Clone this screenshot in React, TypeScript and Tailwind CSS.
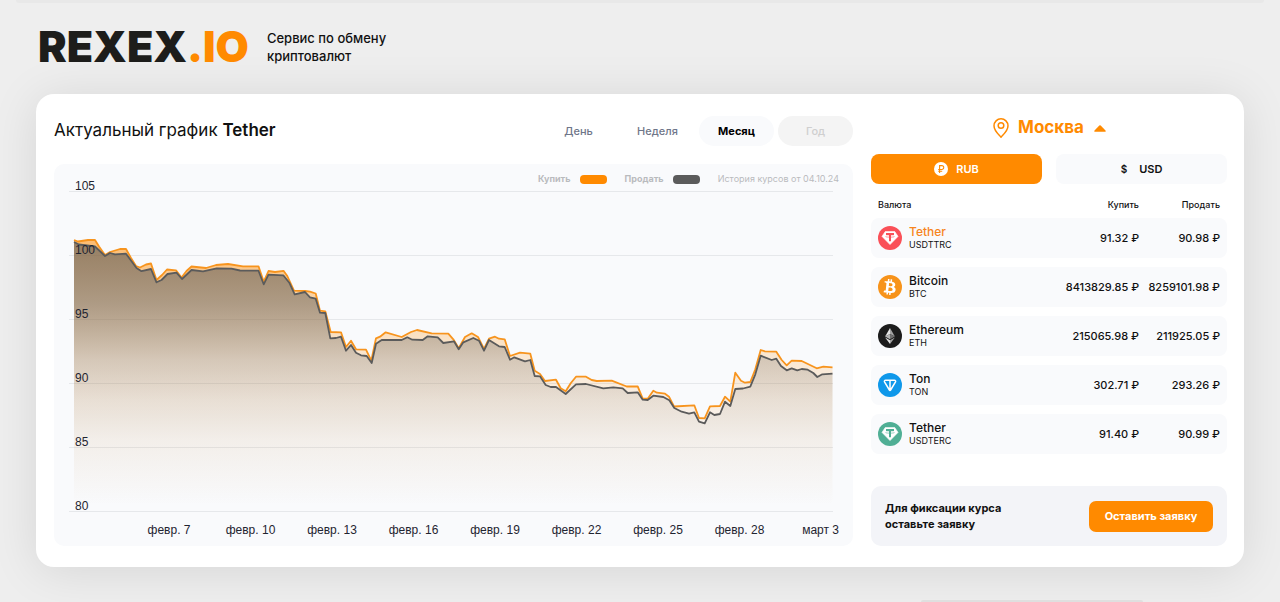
import { useState } from "react";
import { FaBtc } from "react-icons/fa";

type Coin = {
  name: string;
  code: string;
  buy: string;
  sell: string;
  icon: "tether" | "bitcoin" | "ethereum" | "ton";
  color: string;
};

const COINS: Coin[] = [
  { name: "Tether", code: "USDTTRC", buy: "91.32 ₽", sell: "90.98 ₽", icon: "tether", color: "#fa5058" },
  { name: "Bitcoin", code: "BTC", buy: "8413829.85 ₽", sell: "8259101.98 ₽", icon: "bitcoin", color: "#f7931a" },
  { name: "Ethereum", code: "ETH", buy: "215065.98 ₽", sell: "211925.05 ₽", icon: "ethereum", color: "#1c1c1c" },
  { name: "Ton", code: "TON", buy: "302.71 ₽", sell: "293.26 ₽", icon: "ton", color: "#0f98ea" },
  { name: "Tether", code: "USDTERC", buy: "91.40 ₽", sell: "90.99 ₽", icon: "tether", color: "#50af95" },
];

const PERIODS = ["День", "Неделя", "Месяц", "Год"];

const GRID = [
  { label: "105", y: 192 },
  { label: "100", y: 256 },
  { label: "95", y: 320 },
  { label: "90", y: 384 },
  { label: "85", y: 448 },
  { label: "80", y: 512 },
];

const DATES = ["февр. 7", "февр. 10", "февр. 13", "февр. 16", "февр. 19", "февр. 22", "февр. 25", "февр. 28", "март 3"];

const BUY =
  "74,240 78,241.5 88,240 95,240 99,246.5 105,255 110,252 120,249 126,249 131,258 136,266 140,267.5 146,264.5 151,263.5 156.5,280 162,275 167,269.5 176,270.3 181.5,277.5 186.5,271 191.5,266.5 206,268 216,265 228,264 243,266.3 258.5,266.3 263.7,281.5 268.5,271 275,272 283.5,270.8 287.3,276 294,290.7 305,291 310,291.6 315.7,293.5 320,310.7 325.3,311.3 330.7,332 341,332.3 346,347 351,340.7 356,349.3 366,349.7 371.3,360.7 376,338.3 380,336.7 385.7,332.3 401.7,337 411,332 417,330 431.7,333.3 448.3,333.7 453.3,339.3 458.7,348.3 465,337 471.7,333.3 478,337 484,349 489,338.7 495,336.7 499,338.7 504.7,339.3 510,356 520,352.7 530.3,353.7 534.7,370.7 540,374 545,381 556,379.7 560.7,388.3 565.7,391.3 570.7,383.3 576,376.7 586,376.7 591.7,380 596.7,381 611.7,380.7 626.7,386.5 637.7,386.3 642.7,398.7 647.7,398.7 653.3,390.7 657,392.7 665,393.7 669,396.7 674,406.5 694.3,405.3 699,418 704.7,418.3 710,406.3 720,406 725,396.7 730.3,401.7 735.3,372.7 741,380.7 745,382.7 750.3,382 755.3,369.3 760.7,350 765,351.3 776.3,351.7 781.7,360 786.7,365.3 791.7,360.7 801.7,361 816.7,368.3 823.3,366.7 832.5,367.3";

const SELL =
  "74,242 79,244.5 95,246.5 105,256 110,253 115,254.3 126,253.7 136.5,268 141.5,271.2 151,269 156.5,282.3 161.5,280 167.5,274 176.5,272.7 182,279 191.5,270 203,271.3 216.7,268.4 231.5,268.7 240,270.5 258.5,270.7 263.7,284.3 268.5,274.6 283.3,275.3 289.3,282.7 294.7,294.3 305,292 310,297.3 315.7,298.7 320,312.7 325.3,313 330.3,338.3 336,338 341,336.7 346,350.7 351,345 356,352.7 361,355.3 366.7,356 371.7,363 376,343.7 381.7,340 401.7,340 407.3,337.3 412.3,339.7 422.7,340 427.7,336.3 437.7,337.3 443.3,343 454,341.3 458.7,349.3 463.3,342.3 473.3,338 479,340.7 484,350.7 489,340 499,346.3 504.7,347 510,359.7 514.3,357.3 525,361.3 530.3,360 534.7,376 540,376.3 545.7,385 550.7,387 556,387 565.7,394 576,384.3 586,384 603.3,388.3 613.3,387.3 622.7,388.3 627.7,393 637.7,392.3 642.7,399.7 647.7,400 653.3,395.7 663.3,397 669.3,400.3 674.3,408 681.7,411.7 689,413.7 694.3,412.3 699,421.7 704.7,423.3 710,412.3 714.3,415 720,414 725,401.7 730.3,406 735.3,389 743,388.5 750.3,386.7 755.3,374.3 760.7,355.7 771.7,360 776.3,358.7 781,366 786.7,370.3 791.7,368.3 797.3,370.3 801.7,369 807.7,369.7 813.3,373 817.3,377 822.3,374.3 832.5,373.7";

// [offset, opacity] pairs for the two area fills
const BUY_STOPS = [[0, 0.55], [0.24, 0.32], [0.45, 0.16], [0.6, 0.1], [0.75, 0.05], [1, 0]];
const SELL_STOPS = [[0, 0.64], [0.24, 0.48], [0.45, 0.23], [0.6, 0.11], [0.75, 0.04], [1, 0]];

function CoinIcon({ icon, color }: { icon: Coin["icon"]; color: string }) {
  return (
    <span className="flex size-6 shrink-0 items-center justify-center rounded-full text-white" style={{ background: color }}>
      {icon === "tether" && (
        <svg viewBox="0 0 24 24" className="size-6" aria-hidden="true">
          <path d="M7.2 5.600h9.600l3.200 4.800L12 18.600 4 10.400z" fill="#fff" stroke="#fff" strokeWidth="0.6" strokeLinejoin="round" />
          <path d="M8 7h8v1.900h-3v6.300h-2V8.900H8z" fill={color} />
          <path d="M11 9.900c-4.600.2-4.600 1.300 0 1.500m2-1.500c4.600.2 4.600 1.300 0 1.500" fill="none" stroke={color} strokeWidth="0.4" />
        </svg>
      )}
      {icon === "bitcoin" && <FaBtc className="size-4 rotate-6" />}
      {icon === "ethereum" && (
        <svg viewBox="0 0 24 24" className="size-6" aria-hidden="true">
          <path d="M12 4v6.1l-4.9 2.3z" fill="#e4e4e4" />
          <path d="M12 4v6.1l4.9 2.3z" fill="#a4a4a4" />
          <path d="M12 10.1v5.2l-4.9-2.9z" fill="#b4b4b4" />
          <path d="M12 10.1v5.2l4.9-2.9z" fill="#707070" />
          <path d="M12 16.3V20l-4.9-6.6z" fill="#e4e4e4" />
          <path d="M12 16.3V20l4.9-6.6z" fill="#a4a4a4" />
        </svg>
      )}
      {icon === "ton" && (
        <svg viewBox="0 0 24 24" className="size-6" fill="none" stroke="#fff" strokeWidth="1.5" strokeLinejoin="round" aria-hidden="true">
          <path d="M7.5 7.2h9c.9 0 1.4.9 1 1.7L12.6 17c-.3.5-.9.5-1.2 0L6.5 8.9c-.4-.8.1-1.7 1-1.7zM12 7.2V17" />
        </svg>
      )}
    </span>
  );
}

function Chart() {
  return (
    <svg viewBox="54 164 799 382" className="block w-full" role="img" aria-label="Купить / Продать">
      <defs>
        <linearGradient id="buyFill" gradientUnits="userSpaceOnUse" x1="0" y1="240" x2="0" y2="506">
          {BUY_STOPS.map(([offset, opacity]) => (
            <stop key={offset} offset={offset} stopColor="#ff8a00" stopOpacity={opacity} />
          ))}
        </linearGradient>
        <linearGradient id="sellFill" gradientUnits="userSpaceOnUse" x1="0" y1="240" x2="0" y2="506">
          {SELL_STOPS.map(([offset, opacity]) => (
            <stop key={offset} offset={offset} stopColor="#5b5b5b" stopOpacity={opacity} />
          ))}
        </linearGradient>
      </defs>
      {GRID.map((g) => (
        <line key={g.label} x1="69" x2="833" y1={g.y - 0.5} y2={g.y - 0.5} stroke="#e6e8eb" />
      ))}
      <polygon points={`74,512 ${BUY} 832.5,512`} fill="url(#buyFill)" />
      <polygon points={`74,512 ${SELL} 832.5,512`} fill="url(#sellFill)" />
      <polyline points={BUY} fill="none" stroke="#f7941e" strokeWidth="1.8" strokeLinejoin="round" />
      <polyline points={SELL} fill="none" stroke="#5b5b5b" strokeWidth="1.8" strokeLinejoin="round" />
      <g className="font-['Liberation_Sans',sans-serif] text-[12px]" fill="#1f2430">
        {GRID.map((g) => (
          <text key={g.label} x="75" y={g.y - 2}>
            {g.label}
          </text>
        ))}
        {DATES.map((d, i) => (
          <text key={d} x={i === 8 ? 839 : 169 + i * 81.5} y="534" textAnchor={i === 8 ? "end" : "middle"}>
            {d}
          </text>
        ))}
      </g>
    </svg>
  );
}

export default function App() {
  const [period, setPeriod] = useState("Месяц");
  const [currency, setCurrency] = useState("RUB");
  const [coin, setCoin] = useState("USDTTRC");

  return (
    <div className="min-h-screen overflow-hidden bg-[#eeeeee] font-['Inter',sans-serif] text-[#111111]">
      <div className="mx-4 h-[3px] rounded-b-lg bg-[#e8e8e8]" />

      <header className="mb-1 flex h-[87px] items-center gap-[18px] px-[38px]">
        <a href="/" className="text-[43px] leading-none font-black text-[#1d1d1b]">
          REXEX<span className="text-[#ff8a00]">.IO</span>
        </a>
        <p className="text-[13px] leading-[18px] font-medium">
          Сервис по обмену
          <br />
          криптовалют
        </p>
      </header>

      <main className="mx-9 flex gap-[18px] rounded-[18px] bg-white pt-[22px] pr-[17px] pb-[21px] pl-[18px] shadow-[0_4px_48px_rgba(0,0,0,0.1)]">
        {/* CHART */}
        <section className="min-w-0 flex-1">
          <div className="mb-[18px] flex h-[30px] items-center justify-between">
            <h1 className="text-[17px]">
              Актуальный график <b className="font-semibold">Tether</b>
            </h1>
            <div className="flex gap-1">
              {PERIODS.map((p) => {
                const on = period === p;
                const off = p === "Год";
                return (
                  <button
                    key={p}
                    disabled={off}
                    aria-pressed={on}
                    onClick={() => setPeriod(p)}
                    className={`h-[30px] w-[75px] rounded-full text-[11px] ${
                      off ? "bg-[#f4f4f4] font-medium text-[#cfcfcf]" : on ? "bg-[#f9fafc] font-bold text-black" : "font-medium text-[#6f7689]"
                    }`}
                  >
                    {p}
                  </button>
                );
              })}
            </div>
          </div>
          <div className="relative rounded-[10px] bg-[#f9fafc]">
            <Chart />
            <div className="absolute top-[7px] right-3.5 flex h-4 items-center gap-[18px] text-[9px] text-[#b9bbbe]">
              <span className="flex items-center gap-[9px] font-bold">
                Купить <i className="h-[9px] w-[27px] rounded-[4px] bg-[#ff8a00]" />
              </span>
              <span className="flex items-center gap-[9px] font-bold">
                Продать <i className="h-[9px] w-[27px] rounded-[4px] bg-[#5b5b5b]" />
              </span>
              <span>История курсов от 04.10.24</span>
            </div>
          </div>
        </section>

        {/* RATES */}
        <section className="flex w-[356px] shrink-0 flex-col">
          <button className="mb-[14px] flex h-6 items-center justify-center gap-2 text-[17px] font-bold text-[#ff8a00]">
            <svg viewBox="0 0 18 22" className="h-[22px] w-[18px]" fill="none" stroke="currentColor" strokeWidth="1.5" strokeLinejoin="round" aria-hidden="true">
              <path d="M9 20.2C7.8 18.6 2 14.2 2 8.8a7 7 0 0 1 14 0C16 14.2 10.2 18.6 9 20.2z" />
              <circle cx="9" cy="8.5" r="2.8" />
            </svg>
            Москва
            <svg viewBox="0 0 12 7" className="ml-0.5 h-[7px] w-3" fill="currentColor" aria-hidden="true">
              <path d="M5.3.5a1 1 0 0 1 1.4 0l4.8 5.1c.4.5.2 1.2-.5 1.2H1C.3 6.8.1 6.1.5 5.6z" />
            </svg>
          </button>

          <div className="flex gap-[14px] text-[11px]">
            <button
              aria-pressed={currency === "RUB"}
              onClick={() => setCurrency("RUB")}
              className={`flex h-[30px] flex-1 items-center justify-center gap-2 rounded-[8px] font-semibold ${
                currency === "RUB" ? "bg-[#ff8a00] text-white" : "bg-[#f9fafc]"
              }`}
            >
              <svg viewBox="0 0 14 14" className="size-3.5" aria-hidden="true">
                <circle cx="7" cy="7" r="7" fill={currency === "RUB" ? "#fff" : "#111"} />
                <path d="M5.6 11V3.6h2.200a1.900 1.900 0 0 1 0 3.900H4.200M4.200 9.200h4" fill="none" stroke={currency === "RUB" ? "#ff8a00" : "#fff"} strokeWidth="1.1" />
              </svg>
              RUB
            </button>
            <button
              aria-pressed={currency === "USD"}
              onClick={() => setCurrency("USD")}
              className={`flex h-[30px] flex-1 items-center justify-center gap-3 rounded-[8px] font-semibold ${
                currency === "USD" ? "bg-[#ff8a00] text-white" : "bg-[#f9fafc]"
              }`}
            >
              <span className="text-[10px]">$</span>
              USD
            </button>
          </div>

          <table className="w-full border-separate border-spacing-x-0 border-spacing-y-[9px]">
            <thead>
              <tr className="text-[9px] leading-[9px]">
                <th className="pt-[7px] pl-[7px] text-left font-medium">Валюта</th>
                <th className="pt-[7px] text-right font-medium">Купить</th>
                <th className="w-[88px] pt-[7px] pr-[7px] text-right font-medium">Продать</th>
              </tr>
            </thead>
            <tbody>
              {COINS.map((c) => (
                <tr key={c.code} onClick={() => setCoin(c.code)} className="h-10 cursor-pointer bg-[#f9fafc] text-[11px] font-medium whitespace-nowrap">
                  <td className="rounded-l-[8px] p-0 pl-[7px]">
                    <div className="flex items-center gap-[7px]">
                      <CoinIcon icon={c.icon} color={c.color} />
                      <div className="leading-[13px]">
                        <div className={`text-[12px] ${coin === c.code ? "text-[#f7851d]" : ""}`}>{c.name}</div>
                        <div className="text-[9px] font-normal">{c.code}</div>
                      </div>
                    </div>
                  </td>
                  <td className="p-0 text-right">{c.buy}</td>
                  <td className="rounded-r-[8px] p-0 pr-[7px] text-right">{c.sell}</td>
                </tr>
              ))}
            </tbody>
          </table>

          <div className="mt-auto flex items-center justify-between rounded-[10px] bg-[#f3f4f8] p-[14px]">
            <p className="text-[11px] leading-4 font-bold">
              Для фиксации курса
              <br />
              оставьте заявку
            </p>
            <button className="h-[31px] w-[124px] rounded-[7px] bg-[#ff8a00] text-[11px] font-bold text-white">Оставить заявку</button>
          </div>
        </section>
      </main>

      <div className="mt-[33px] mr-[137px] ml-auto h-0.5 w-[222px] rounded-t-lg bg-[#dfdfdf]" />
    </div>
  );
}
